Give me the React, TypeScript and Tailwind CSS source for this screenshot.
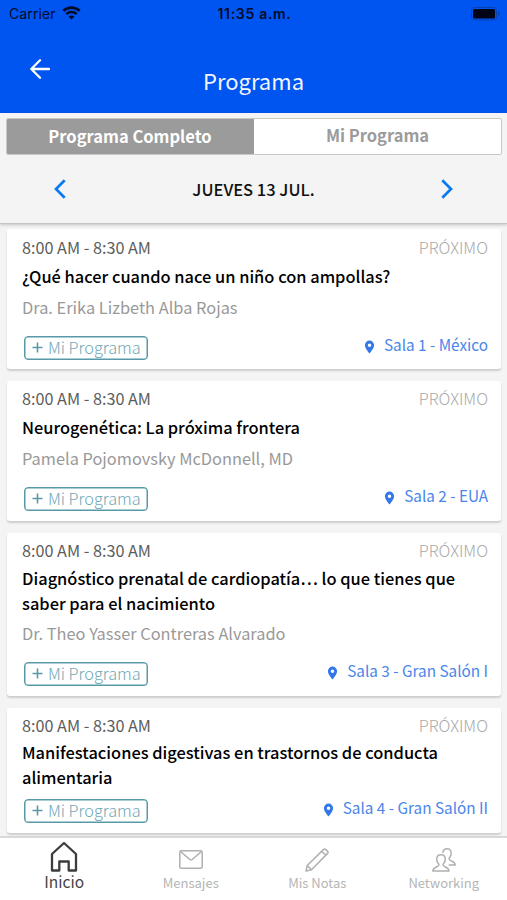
import React from "react";

type Session = {
  title: string[];
  speaker?: string;
  room: string;
  frame: string;
  heading: string;
  details: string;
  actions: string;
};

const sessions: Session[] = [
  { title: ["¿Qué hacer cuando nace un niño con ampollas?"], speaker: "Dra. Erika Lizbeth Alba Rojas", room: "Sala 1 - México", frame: "h-[140px] pt-[6px]", heading: "mt-[5px]", details: "mt-[6px]", actions: "mt-[17.500px]" },
  { title: ["Neurogenética: La próxima frontera"], speaker: "Pamela Pojomovsky McDonnell, MD", room: "Sala 2 - EUA", frame: "h-[140px] pt-[5px]", heading: "mt-[5px]", details: "mt-[6px]", actions: "mt-[17.500px]" },
  { title: ["Diagnóstico prenatal de cardiopatía… lo que tienes que", "saber para el nacimiento"], speaker: "Dr. Theo Yasser Contreras Alvarado", room: "Sala 3 - Gran Salón I", frame: "h-[163px] pt-[5px]", heading: "mt-[4px]", details: "mt-[6px]", actions: "mt-[17px]" },
  { title: ["Manifestaciones digestivas en trastornos de conducta", "alimentaria"], room: "Sala 4 - Gran Salón II", frame: "h-[125px] pt-[5px]", heading: "mt-[3px]", details: "mt-[6px]", actions: "mt-[10px]" },
];

function Pin() {
  return (
    <svg width="11" height="14" viewBox="0 0 10 14" className="mr-[9px] mt-[5px]">
      <path fill="#3478e8" fillRule="evenodd" d="M5 .6A4.600 4.600 0 0 0 .4 5.200C.4 8.500 5 13.400 5 13.400s4.600-4.900 4.600-8.200A4.600 4.600 0 0 0 5 .6Zm0 6.300a1.750 1.750 0 1 1 0-3.500 1.750 1.750 0 0 1 0 3.500Z" />
    </svg>
  );
}

function SessionCard({ s }: { s: Session }) {
  return (
    <article className={`${s.frame} mb-[12px] shrink-0 rounded-[3px] bg-white px-[15px] shadow-[0_2px_2px_rgba(0,0,0,0.16)]`}>
      <div className="flex justify-between text-[16.200px] leading-[24px]">
        <span className="text-[#5c5c5c]">8:00 AM - 8:30 AM</span>
        <span className="mr-[-2px] text-[16.300px] font-light text-[#a8a8a8]">PRÓXIMO</span>
      </div>
      <h2 className={`${s.heading} text-[16.420px] leading-[24.500px] font-medium whitespace-nowrap text-black`}>
        {s.title.map((line) => <span key={line} className="block">{line}</span>)}
      </h2>
      {s.speaker && <p className={`${s.details} text-[16.380px] leading-[24px] text-[#999]`}>{s.speaker}</p>}
      <div className={`${s.actions} flex items-start justify-between`}>
        <button className="ml-[2px] flex h-[24px] w-[124px] items-center rounded-[4px] border border-[#5799a6] pl-[7px] text-[16.300px] leading-[20px] font-light text-[#6fa8b4] shadow-[inset_0_0_0_0.5px_#5799a6]">
          <svg width="11" height="11" viewBox="0 0 11 11" className="-mt-[2px] mr-[5px]"><path d="M5.500 .5v10M.5 5.500h10" stroke="#5799a6" strokeWidth="1.600" /></svg>
          <span className="-mt-[3px] whitespace-nowrap">Mi Programa</span>
        </button>
        <div className="mr-[-2px] -mt-[4px] flex h-[24px] items-center text-[15.300px] leading-[24px] text-[#4a86ea]">
          <Pin />
          <span>{s.room}</span>
        </div>
      </div>
    </article>
  );
}

function Tab({ label, children }: { label: string; children: React.ReactNode }) {
  return (
    <div className="flex flex-1 flex-col items-center pt-[9px] text-[#b5b5b5]">
      <div className="flex h-[25px] items-center">{children}</div>
      <span className="mt-px text-[13px] leading-[20px]">{label}</span>
    </div>
  );
}

export default function App() {
  return (
    <div className="flex h-[900px] w-[507px] flex-col overflow-hidden bg-[#f4f4f4] font-['Noto_Sans_CJK_JP','Noto_Sans_CJK_SC',sans-serif]">
      <header className="h-[113px] shrink-0 bg-[#0054f0]">
        <div className="grid h-[27px] grid-cols-3 items-center pl-[9px] pr-[7px] font-[Inter,sans-serif] text-[14px] text-[#020b28]">
          <div className="flex items-center gap-[6px]">
            <span className="tracking-[0.1px]">Carrier</span>
            <svg width="19" height="14" viewBox="0 0 19 14" fill="none" stroke="#020b28" strokeWidth="2.600" className="-mt-px">
              <path d="M1.300 4.800c4.700-4.300 11.700-4.300 16.400 0M4.300 8c3-2.700 7.400-2.700 10.400 0" />
              <path d="m9.500 13.600-3-3c1.700-1.500 4.300-1.500 6 0Z" fill="#020b28" stroke="none" />
            </svg>
          </div>
          <span className="text-center text-[14px] font-semibold tracking-[0.7px] whitespace-nowrap">11:35 a.m.</span>
          <svg className="justify-self-end" width="29" height="14" viewBox="0 0 29 14">
            <rect x=".5" y=".5" width="25" height="12.500" rx="3" fill="none" stroke="#0642b5" />
            <rect x="2" y="2" width="22" height="9.500" rx="1.500" fill="#000414" />
            <path d="M27 4.500c2 1 2 3.500 0 4.500Z" fill="#0642b5" />
          </svg>
        </div>
        <div className="relative flex h-[86px] justify-center pt-[36px]">
          <svg className="absolute top-[32px] left-[30px]" width="20" height="20" viewBox="0 0 20 20" fill="none" stroke="white" strokeWidth="2.300" strokeLinecap="round" strokeLinejoin="round">
            <path d="M19 10H1.500M10 1.300 1.300 10l8.700 8.700" />
          </svg>
          <h1 className="text-[22px] leading-[34px] text-[#f0f5ff]">Programa</h1>
        </div>
      </header>
      <section className="z-10 h-[111px] shrink-0 border-b border-[#c4c4c4] px-[6px] pr-[5px] pt-[5px] shadow-[0_1px_3px_rgba(0,0,0,0.200)]">
        <div className="flex h-[37px] overflow-hidden rounded-[2px] border border-[#c8c8c8] bg-white text-center text-[16.500px] font-bold">
          <div className="w-[247px] pr-px bg-[#9b9b9b] leading-[34px] text-white">Programa Completo</div>
          <div className="flex-1 leading-[32px] text-[#9b9b9b]">Mi Programa</div>
        </div>
        <div className="flex h-[68px] items-center justify-between pl-[48px] pr-[49px]">
          <svg width="12" height="20" viewBox="0 0 12 20" fill="none" stroke="#0879f2" strokeWidth="2.700"><path d="M10.700 1.200 2 10l8.700 8.800" /></svg>
          <span className="-mt-px text-[16.500px] leading-[24px] font-medium text-[#111]">JUEVES 13 JUL.</span>
          <svg width="12" height="20" viewBox="0 0 12 20" fill="none" stroke="#0879f2" strokeWidth="2.700"><path d="M1.300 1.200 10 10l-8.700 8.800" /></svg>
        </div>
      </section>
      <main className="flex h-[612px] shrink-0 flex-col overflow-hidden px-[6px] pl-[7px] pt-[5px]">
        {sessions.map((s) => <SessionCard key={s.room} s={s} />)}
      </main>
      <nav className="flex h-[64px] shrink-0 border-t-2 border-[#d8d8d8] bg-white">
        <div className="flex flex-1 flex-col items-center pt-[3px] pl-px text-[#444]">
          <svg width="28" height="31" viewBox="0 0 28 31" fill="none" stroke="#3c3c3c" strokeWidth="2.300" strokeLinejoin="round">
            <path d="M2 13 14 2l12 11v16.500h-7.300v-9H9.300v9H2Z" />
          </svg>
          <span className="-mt-px text-[15.500px] leading-[20px]">Inicio</span>
        </div>
        <Tab label="Mensajes">
          <svg width="24" height="19" viewBox="0 0 24 19" fill="none" stroke="#b0b0b0" strokeWidth="1.500"><rect x=".8" y=".8" width="22.400" height="17.400" rx="1.500" /><path d="m1.500 1.500 9.300 8q1.200 1 2.400 0l9.300-8" /></svg>
        </Tab>
        <Tab label="Mis Notas">
          <svg width="24" height="24" viewBox="0 0 24 24" fill="none" stroke="#b0b0b0" strokeWidth="1.500" strokeLinejoin="round"><path d="m1 23 1.200-5.500L18.600 1.400q1-.9 2 0l2 2q.9 1 0 2L6.500 21.800ZM2.200 17.500l4.300 4.300M16.800 3.200l4 4" /></svg>
        </Tab>
        <Tab label="Networking">
          <svg width="24" height="24" viewBox="0 0 24 24" fill="none" stroke="#b0b0b0" strokeWidth="1.500" strokeLinejoin="round">
            <path d="M7 16.500C5 14.500 4.500 12.500 4.700 10.500 5 8 6.700 6.700 9 6.700s4 1.300 4.300 3.800c.2 2-.3 4-2.300 6 0 3 5.800 2 6 6.500H.8c.2-4.500 6.200-3.500 6.200-6.500Z" />
            <path d="M10.800 5C11 2.300 12.700.8 15 .8s4 1.500 4.200 4c.2 2.200-.5 4-2.200 5.700 0 3 6 2 6.200 6.500h-6.500" />
          </svg>
        </Tab>
      </nav>
    </div>
  );
}
